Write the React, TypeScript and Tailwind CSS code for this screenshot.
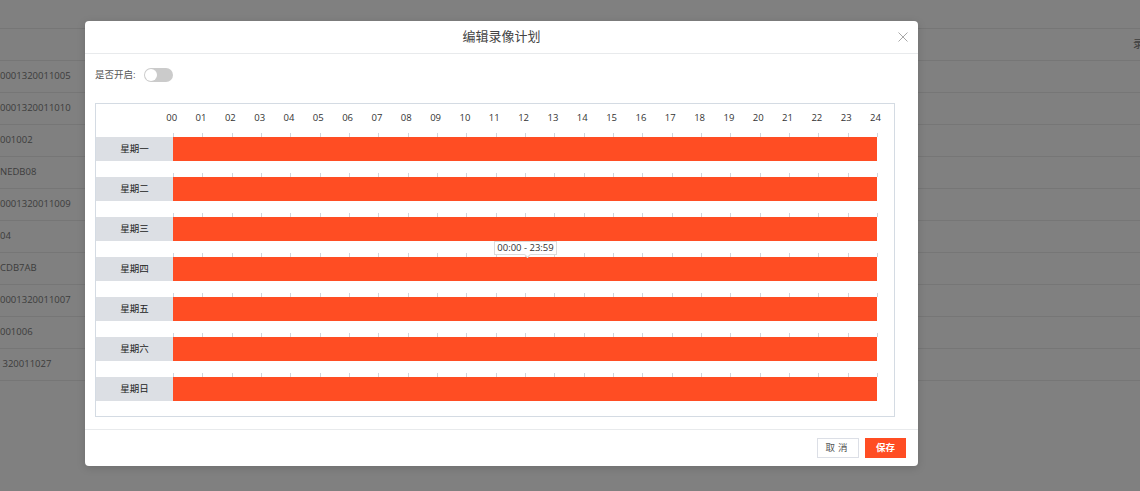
import React from "react";

const days = ["星期一", "星期二", "星期三", "星期四", "星期五", "星期六", "星期日"];
const hours = Array.from({ length: 25 }, (_, i) => String(i).padStart(2, "0"));
const rows = [
  "0001320011005",
  "0001320011010",
  "001002",
  "NEDB08",
  "0001320011009",
  "04",
  "CDB7AB",
  "0001320011007",
  "001006",
  " 320011027",
];

const font = { fontFamily: '"Open Sans", "Noto Sans CJK SC", sans-serif' };

export default function App() {
  return (
    <div className="relative h-[491px] w-full overflow-hidden bg-[#808080] text-[#3c3c3c]" style={font}>
      {/* page behind the mask */}
      <div className="h-[29px] border-b border-[#767676]" />
      <div className="flex h-[32px] items-center justify-end border-b border-[#767676] text-[11px]">
        <span className="-mr-[4px]">录</span>
      </div>
      {rows.map((r, i) => (
        <div key={i} className="flex h-[32px] items-center border-b border-[#767676] text-[9.5px] whitespace-pre">
          {r}
        </div>
      ))}

      {/* dialog */}
      <div className="absolute left-[85px] top-[21px] w-[833px] rounded-[4px] bg-white shadow-[0_2px_8px_rgba(0,0,0,0.15)]">
        <div className="relative flex h-[33px] items-center justify-center border-b border-[#e8eaec]">
          <span className="text-[13px] text-[#444]">编辑录像计划</span>
          <svg className="absolute right-[10px] top-[11px] h-[10px] w-[10px]" viewBox="0 0 10 10">
            <path d="M0.5 0.5L9.5 9.5M9.5 0.5L0.5 9.5" stroke="#a8a8a8" strokeWidth="1" />
          </svg>
        </div>

        <div className="px-[10px] pt-[14px] pb-[12px]">
          <div className="flex h-[14px] items-center gap-[8px]">
            <span className="text-[9.5px] text-[#555]">是否开启:</span>
            <div className="flex h-[14px] w-[29px] items-center rounded-full bg-[#cbcbcb] px-[1px]">
              <div className="h-[12px] w-[12px] rounded-full bg-white" />
            </div>
          </div>

          <div className="relative mt-[21px] w-[800px] border border-[#d4dbe3] pb-[15px]">
            <div className="flex h-[29px] items-center pl-[61px]">
              {hours.map((h) => (
                <span key={h} className="w-[29.33px] text-center text-[9.5px] text-[#333]">
                  {h}
                </span>
              ))}
            </div>
            {days.map((d, i) => (
              <div key={d} className={i < 6 ? "mb-[12px]" : ""}>
                <div className="ml-[77px] flex h-[4px] w-[705px] justify-between">
                  {hours.map((h) => (
                    <div key={h} className="h-full w-px bg-[#cfd5dc]" />
                  ))}
                </div>
                <div className="flex h-[24px]">
                  <div className="flex w-[77px] items-center justify-center bg-[#dcdfe4] text-[9.5px] text-[#222]">
                    {d}
                  </div>
                  <div className="w-[704px] bg-[#ff4d23]" />
                </div>
              </div>
            ))}

            <div className="absolute left-[398px] top-[137px] flex h-[14px] w-[63px] items-center justify-center border border-[#dcdcdc] bg-white text-[9.5px] text-[#333]">
              00:00 - 23:59
              <div className="absolute -bottom-[3px] left-[30px] h-[5px] w-[5px] rotate-45 border-r border-b border-[#dcdcdc] bg-white" />
            </div>
          </div>
        </div>

        <div className="flex justify-end gap-[6px] border-t border-[#e8eaec] px-[12px] pt-[8px] pb-[8px]">
          <button className="flex h-[20px] w-[42px] items-center justify-center border border-[#dcdfe6] bg-white text-[9.5px] tracking-[3px] text-[#555]">
            取消
          </button>
          <button className="flex h-[20px] w-[41px] items-center justify-center bg-[#ff4d23] text-[9.5px] font-bold text-white">
            保存
          </button>
        </div>
      </div>
    </div>
  );
}
